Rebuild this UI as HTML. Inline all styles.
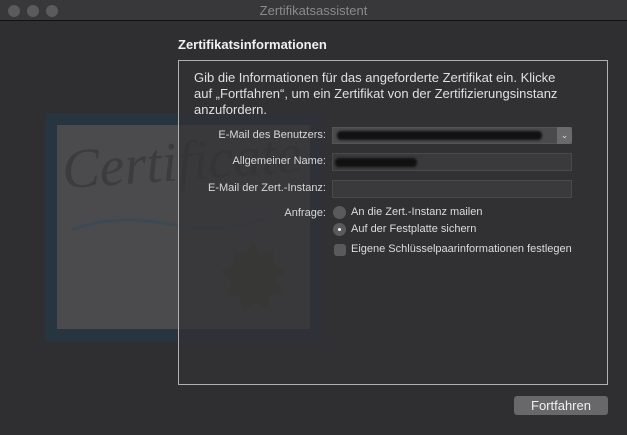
<!DOCTYPE html>
<html><head><meta charset="utf-8"><style>
*{margin:0;padding:0;box-sizing:border-box}
body{width:627px;height:435px;background:#2f2f31;font-family:"Liberation Sans",sans-serif;color:#e6e6e6;position:relative;overflow:hidden}
.tb{position:absolute;left:0;top:0;width:627px;height:21px;background:#38383a;border-bottom:1px solid #111;text-align:center;font-size:13px;line-height:21px;color:#8a8a8c}
.dot{position:absolute;top:5px;width:12px;height:12px;border-radius:50%;background:#5b5b5d}
.a{position:absolute}
.lbl{position:absolute;right:301px;font-size:11px;color:#d8d8d8;white-space:nowrap}
.fld{position:absolute;left:332px;width:240px;height:18px;background:#3a3a3c;border:1px solid #4a4a4c}
.opt{position:absolute;left:351px;font-size:11px;color:#dcdcdc;white-space:nowrap}
</style></head><body>
<div class="tb">Zertifikatsassistent</div>
<div class="dot" style="left:8px"></div><div class="dot" style="left:27px"></div><div class="dot" style="left:46px"></div>
<div class="a" style="left:45px;top:113px;width:277px;height:229px;background:#273540"></div>
<div class="a" style="left:57px;top:125px;width:253px;height:204px;background:#4b4b4d"></div>
<div class="a" style="left:62px;top:130px;font-family:'Liberation Serif',serif;font-style:italic;font-size:56px;color:#3c3c3e;transform:rotate(-4deg)">Certificate</div>
<svg class="a" style="left:70px;top:210px" width="200" height="30"><path d="M2 20 Q40 4 100 14 Q150 24 198 8" stroke="#3c4a55" stroke-width="3" fill="none"/></svg>
<svg class="a" style="left:218px;top:240px" width="70" height="75"><polygon points="35,2 42,14 56,9 55,24 68,30 58,40 66,53 52,55 50,70 37,62 25,72 22,57 7,55 14,42 3,31 16,24 15,9 29,14" fill="#454538"/></svg>
<div class="a" style="left:178px;top:60px;width:430px;height:325px;border:1px solid #b0b0b0;background:rgba(50,50,52,0.7)"></div>
<div class="a" style="left:178px;top:37px;font-size:13px;font-weight:bold;color:#f0f0f0">Zertifikatsinformationen</div>
<div class="a" style="left:194px;top:70px;width:410px;font-size:13px;line-height:16px;color:#e0e0e0;white-space:nowrap">Gib die Informationen für das angeforderte Zertifikat ein. Klicke<br>auf „Fortfahren“, um ein Zertifikat von der Zertifizierungsinstanz<br>anzufordern.</div>
<div class="lbl" style="top:129px">E-Mail des Benutzers:</div>
<div class="lbl" style="top:155px">Allgemeiner Name:</div>
<div class="lbl" style="top:182px">E-Mail der Zert.-Instanz:</div>
<div class="lbl" style="top:207px">Anfrage:</div>
<div class="fld" style="top:127px;height:17px;background:#4a4a4c;border-color:#555"><div class="a" style="left:4px;top:3px;width:205px;height:9px;background:#111;border-radius:4px;filter:blur(1px)"></div><div class="a" style="right:-1px;top:-1px;width:15px;height:17px;background:#6a6a6c;border-radius:0 3px 3px 0;font-size:9px;text-align:center;line-height:16px;color:#ddd">⌄</div></div>
<div class="fld" style="top:153px"><div class="a" style="left:2px;top:4px;width:82px;height:9px;background:#111;border-radius:4px;filter:blur(1px)"></div></div>
<div class="fld" style="top:180px"></div>
<div class="a" style="left:333px;top:206px;width:13px;height:13px;border-radius:50%;background:#5a5a5c"></div>
<div class="a" style="left:333px;top:223px;width:13px;height:13px;border-radius:50%;background:#5a5a5c"></div>
<div class="a" style="left:338px;top:228px;width:3px;height:3px;border-radius:50%;background:#fff"></div>
<div class="a" style="left:334px;top:244px;width:12px;height:12px;border-radius:3px;background:#5a5a5c"></div>
<div class="opt" style="top:206px">An die Zert.-Instanz mailen</div>
<div class="opt" style="top:223px">Auf der Festplatte sichern</div>
<div class="opt" style="top:243px">Eigene Schlüsselpaarinformationen festlegen</div>
<div class="a" style="left:514px;top:396px;width:94px;height:19px;background:#68686a;border-radius:3px;font-size:13px;color:#f0f0f0;text-align:center;line-height:19px">Fortfahren</div>
</body></html>
